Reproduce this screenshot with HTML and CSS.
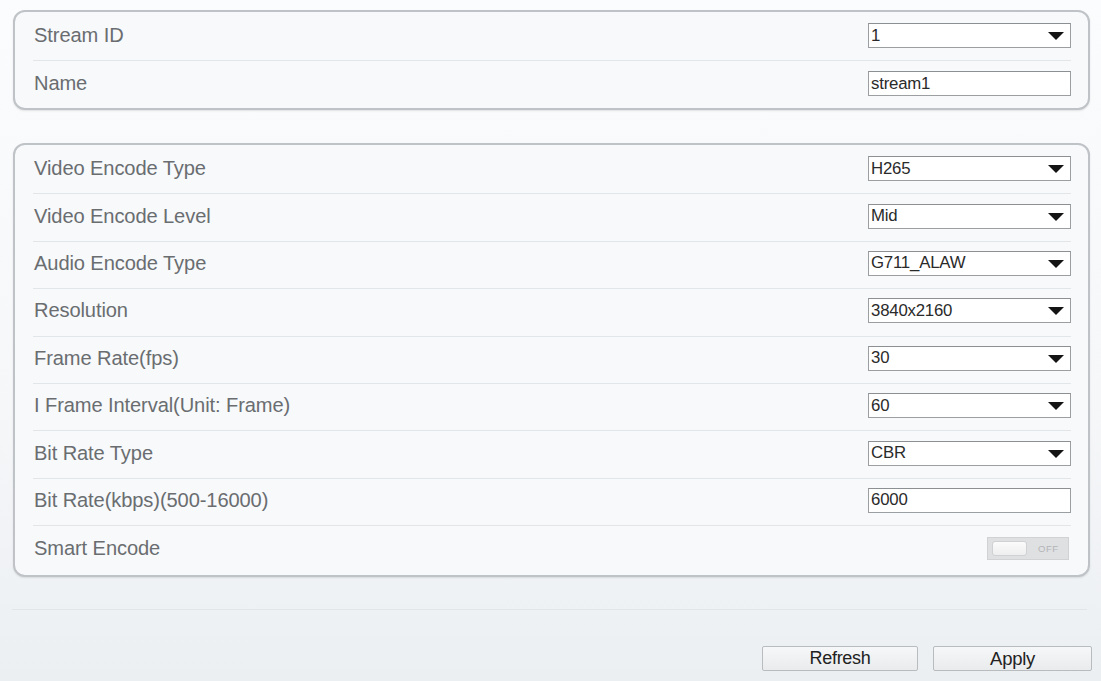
FILE: index.html
```html
<!DOCTYPE html>
<html>
<head>
<meta charset="utf-8">
<link rel="stylesheet" href="styles.css">
</head>
<body>
<div class="page">
  <div class="panel panel-top">
    <div class="row">
      <span class="label">Stream ID</span>
      <div class="select"><span class="value">1</span><span class="arrow"></span></div>
    </div>
    <div class="row">
      <span class="label">Name</span>
      <div class="textbox">stream1</div>
    </div>
  </div>

  <div class="panel panel-main">
    <div class="row">
      <span class="label">Video Encode Type</span>
      <div class="select"><span class="value">H265</span><span class="arrow"></span></div>
    </div>
    <div class="row">
      <span class="label">Video Encode Level</span>
      <div class="select"><span class="value">Mid</span><span class="arrow"></span></div>
    </div>
    <div class="row">
      <span class="label">Audio Encode Type</span>
      <div class="select"><span class="value">G711_ALAW</span><span class="arrow"></span></div>
    </div>
    <div class="row">
      <span class="label">Resolution</span>
      <div class="select"><span class="value">3840x2160</span><span class="arrow"></span></div>
    </div>
    <div class="row">
      <span class="label">Frame Rate(fps)</span>
      <div class="select"><span class="value">30</span><span class="arrow"></span></div>
    </div>
    <div class="row">
      <span class="label">I Frame Interval(Unit: Frame)</span>
      <div class="select"><span class="value">60</span><span class="arrow"></span></div>
    </div>
    <div class="row">
      <span class="label">Bit Rate Type</span>
      <div class="select"><span class="value">CBR</span><span class="arrow"></span></div>
    </div>
    <div class="row">
      <span class="label">Bit Rate(kbps)(500-16000)</span>
      <div class="textbox">6000</div>
    </div>
    <div class="row">
      <span class="label">Smart Encode</span>
      <div class="toggle-cell">
        <div class="toggle"><span class="knob"></span><span class="off">OFF</span></div>
      </div>
    </div>
  </div>

  <div class="separator"></div>

  <div class="actions">
    <button class="btn btn-refresh">Refresh</button>
    <button class="btn btn-apply">Apply</button>
  </div>
</div>
</body>
</html>
```

FILE: styles.css
```css
* {
  box-sizing: border-box;
}

html, body {
  margin: 0;
  padding: 0;
}

body {
  width: 1101px;
  height: 681px;
  overflow: hidden;
  background: linear-gradient(to bottom, #fbfcfd 0%, #f5f7f9 60%, #eceff2 100%);
  font-family: "Liberation Sans", Arial, sans-serif;
}

.page {
  padding: 10px 11px 0 13px;
}

.panel {
  border: 2px solid #bfc2c6;
  border-radius: 12px;
  background: #f7f9fb;
  box-shadow: 0 1px 2px rgba(0, 0, 0, 0.1);
  padding: 0 17px 0 18px;
}

.panel-top {
  height: 100px;
  padding-top: 2px;
}

.panel-main {
  margin-top: 33px;
  height: 434px;
  padding-top: 2px;
}

.row {
  height: 47.4px;
  display: flex;
  align-items: center;
  justify-content: space-between;
  border-bottom: 1px solid #e3e6e9;
  padding-bottom: 3px;
}

.row:last-child {
  border-bottom: none;
}

.label {
  font-size: 20.1px;
  color: #6a6d70;
  padding-left: 1px;
  letter-spacing: -0.1px;
}

.select,
.textbox {
  width: 203px;
  height: 25px;
  border: 1px solid #9c9fa2;
  border-top-color: #8d9093;
  background: #ffffff;
  display: flex;
  align-items: center;
  padding-left: 2px;
  font-size: 16.8px;
  color: #2a2a2a;
  letter-spacing: -0.2px;
}

.select {
  justify-content: space-between;
  padding-right: 6px;
}

.arrow {
  width: 0;
  height: 0;
  border-left: 8px solid transparent;
  border-right: 8px solid transparent;
  border-top: 8px solid #141414;
  margin-top: 1px;
}

.toggle-cell {
  width: 203px;
  display: flex;
  justify-content: flex-end;
  padding-right: 2px;
}

.toggle {
  width: 82px;
  height: 23px;
  background: #dfe0e2;
  border: 1px solid #d0d2d4;
  display: flex;
  align-items: center;
  padding-left: 4px;
}

.knob {
  width: 35px;
  height: 15px;
  background: linear-gradient(to bottom, #fbfbfb, #eeeeee);
  border: 1px solid #cfd1d3;
  border-radius: 3px;
}

.off {
  font-size: 9.5px;
  color: #b3b5b7;
  margin-left: 11px;
  letter-spacing: 0.5px;
}

.separator {
  margin-top: 32px;
  height: 1px;
  background: #e2e5e8;
  margin-right: 3px;
  margin-left: -1px;
}

.actions {
  margin-top: 36px;
  display: flex;
  justify-content: flex-end;
  gap: 15px;
  margin-right: -2px;
}

.btn {
  height: 25px;
  border: 1px solid #b9bcbf;
  border-radius: 2px;
  background: linear-gradient(to bottom, #f6f7f8 0%, #e9ebed 100%);
  font-family: "Liberation Sans", Arial, sans-serif;
  font-size: 18px;
  color: #222222;
  padding: 0;
  letter-spacing: -0.3px;
}

.btn-refresh {
  width: 156px;
}

.btn-apply {
  width: 159px;
  font-size: 18.5px;
}
```
